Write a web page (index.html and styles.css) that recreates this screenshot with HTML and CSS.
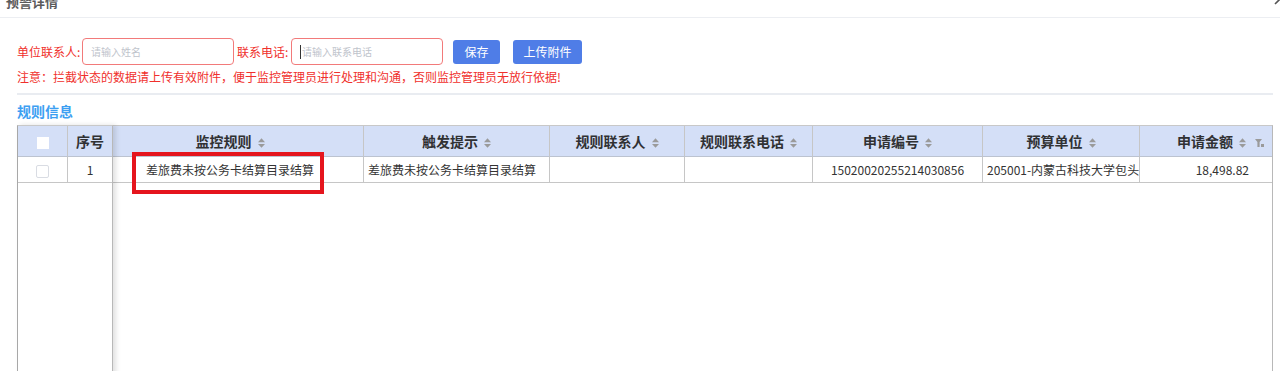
FILE: index.html
```html
<!DOCTYPE html>
<html lang="zh-CN">
<head>
    <meta charset="UTF-8">
    <title>预警详情</title>
    <link rel="stylesheet" href="styles.css">
</head>
<body>
    <div class="dialog">
        <div class="dialog-head">
            <span class="dialog-title">预警详情</span>
            <svg class="dialog-close" width="12" height="12" viewBox="0 0 12 12">
                <path d="M1 1 L11 11 M11 1 L1 11" stroke="#555" stroke-width="1.6"/>
            </svg>
        </div>
        <div class="dialog-body">
            <div class="contact-row">
                <label class="field-label label-name">单位联系人:</label>
                <div class="fake-input"><span class="placeholder">请输入姓名</span></div>
                <label class="field-label label-phone">联系电话:</label>
                <div class="fake-input"><span class="caret"></span><span class="placeholder">请输入联系电话</span></div>
                <button class="btn btn-save">保存</button>
                <button class="btn btn-upload">上传附件</button>
            </div>
            <p class="notice">注意：拦截状态的数据请上传有效附件，便于监控管理员进行处理和沟通，否则监控管理员无放行依据!</p>
            <div class="divider"></div>
            <h3 class="section-title">规则信息</h3>

            <div class="grid">
                <div class="grid-fixed">
                    <table class="grid-table">
                        <colgroup><col style="width:50px"><col style="width:44px"></colgroup>
                        <thead>
                            <tr>
                                <th class="col-check"><span class="check head-check"></span></th>
                                <th class="col-seq">序号</th>
                            </tr>
                        </thead>
                        <tbody>
                            <tr>
                                <td class="col-check"><span class="check"></span></td>
                                <td class="col-seq">1</td>
                            </tr>
                        </tbody>
                    </table>
                </div>
                <div class="grid-main">
                    <table class="grid-table">
                        <colgroup>
                            <col style="width:251px"><col style="width:186px"><col style="width:135px">
                            <col style="width:128px"><col style="width:170px"><col style="width:157px">
                            <col style="width:132px">
                        </colgroup>
                        <thead>
                            <tr>
                                <th class="col-rule">监控规则<svg class="sort" viewBox="0 0 8 11"><path d="M4 0 L8 4.5 L0 4.5Z M0 6.5 L8 6.5 L4 11Z"/></svg></th>
                                <th>触发提示<svg class="sort" viewBox="0 0 8 11"><path d="M4 0 L8 4.5 L0 4.5Z M0 6.5 L8 6.5 L4 11Z"/></svg></th>
                                <th>规则联系人<svg class="sort" viewBox="0 0 8 11"><path d="M4 0 L8 4.5 L0 4.5Z M0 6.5 L8 6.5 L4 11Z"/></svg></th>
                                <th>规则联系电话<svg class="sort" viewBox="0 0 8 11"><path d="M4 0 L8 4.5 L0 4.5Z M0 6.5 L8 6.5 L4 11Z"/></svg></th>
                                <th>申请编号<svg class="sort" viewBox="0 0 8 11"><path d="M4 0 L8 4.5 L0 4.5Z M0 6.5 L8 6.5 L4 11Z"/></svg></th>
                                <th>预算单位<svg class="sort" viewBox="0 0 8 11"><path d="M4 0 L8 4.5 L0 4.5Z M0 6.5 L8 6.5 L4 11Z"/></svg></th>
                                <th class="col-amount">申请金额<svg class="sort" viewBox="0 0 8 11"><path d="M4 0 L8 4.5 L0 4.5Z M0 6.5 L8 6.5 L4 11Z"/></svg><svg class="filter" viewBox="0 0 9 8"><path d="M0 0 H7 L4.6 3 V8 H2.4 V3Z"/><rect x="6" y="5" width="3" height="3"/></svg></th>
                            </tr>
                        </thead>
                        <tbody>
                            <tr>
                                <td class="col-rule">差旅费未按公务卡结算目录结算</td>
                                <td class="cell-left">差旅费未按公务卡结算目录结算</td>
                                <td></td>
                                <td></td>
                                <td>15020020255214030856</td>
                                <td class="cell-left">205001-内蒙古科技大学包头</td>
                                <td class="col-amount amount">18,498.82</td>
                            </tr>
                        </tbody>
                    </table>
                </div>
                <div class="highlight"></div>
            </div>
        </div>
    </div>
</body>
</html>
```

FILE: styles.css
```css
body {
    margin: 0;
    background: #fff;
    font-family: "Noto Sans CJK SC", "Microsoft YaHei", sans-serif;
    color: #333;
    overflow: hidden;
    height: 371px;
}

.dialog-head {
    height: 17px;
    border-bottom: 1px solid #eceef2;
    display: flex;
    justify-content: space-between;
    align-items: flex-start;
    padding-left: 6px;
    overflow: hidden;
}

.dialog-title {
    font-size: 13px;
    line-height: 13px;
    font-weight: bold;
    color: #5a5a5a;
    margin-top: -5px;
}

.dialog-close {
    margin-top: -7px;
    margin-right: -6px;
}

.dialog-body {
    padding: 0 7px 0 17px;
}

.contact-row {
    display: flex;
    align-items: center;
    height: 27px;
    margin-top: 20px;
}

.field-label {
    font-size: 12px;
    color: #f0302c;
    white-space: nowrap;
}

.label-name {
    width: 65px;
}

.label-phone {
    width: 54px;
    margin-left: 3px;
}

.fake-input {
    width: 142px;
    height: 25px;
    border: 1px solid #f27a7a;
    border-radius: 4px;
    display: flex;
    align-items: center;
    padding-left: 8px;
}

.placeholder {
    font-size: 10px;
    color: #c0c4cc;
}

.caret {
    width: 1px;
    height: 14px;
    background: #333;
    margin-right: 1px;
}

.btn {
    height: 24px;
    border: none;
    border-radius: 3px;
    background: #4f7de7;
    color: #fff;
    font-family: inherit;
    font-size: 12px;
    padding: 0;
}

.btn-save {
    width: 47px;
    margin-left: 10px;
}

.btn-upload {
    width: 69px;
    margin-left: 13px;
}

.notice {
    margin: 4px 0 0;
    font-size: 12px;
    line-height: 16px;
    color: #f0302c;
}

.divider {
    height: 2px;
    background: #e9ecf1;
    margin-top: 8px;
}

.section-title {
    margin: 6px 0 0;
    font-size: 14px;
    line-height: 20px;
    font-weight: bold;
    color: #3d9ff2;
}

.grid {
    display: flex;
    margin-top: 4px;
    height: 260px;
    position: relative;
}

.grid-fixed {
    width: 94px;
    border-top: 1px solid #c8c8c8;
    border-left: 1px solid #a8a8a8;
    border-right: 1px solid #b8b8b8;
    box-shadow: 3px 0 5px rgba(0, 0, 0, 0.12);
    position: relative;
    z-index: 1;
    background: #fff;
}

.grid-main {
    width: 1159px;
    border-top: 1px solid #c8c8c8;
    border-right: 1px solid #b8b8b8;
}

.grid-table {
    border-collapse: separate;
    border-spacing: 0;
    table-layout: fixed;
    width: 100%;
}

.grid-table th,
.grid-table td {
    padding: 0 4px;
    border-right: 1px solid #c6c6c6;
    border-bottom: 1px solid #c6c6c6;
    text-align: center;
    white-space: nowrap;
    overflow: hidden;
}

.grid-table th:last-child,
.grid-table td:last-child {
    border-right: none;
}

.grid-table th {
    height: 30px;
    background: #d4dff7;
    font-size: 14px;
    font-weight: bold;
    color: #303133;
    border-bottom-color: #bcc3d0;
}

.grid-table td {
    height: 25px;
    font-size: 12px;
    color: #333;
}

.grid-table .cell-left {
    text-align: left;
}

.grid-table .col-rule {
    padding-right: 20px;
}

.grid-table .col-amount {
    text-align: right;
    padding-right: 8px;
}

.grid-table .amount {
    padding-right: 23px;
}

.check {
    display: inline-block;
    width: 11px;
    height: 11px;
    border: 1px solid #d9dce3;
    border-radius: 2px;
    background: #fff;
    vertical-align: middle;
}

.head-check {
    width: 12px;
    height: 12px;
    border: none;
    border-radius: 0;
}

.sort {
    width: 7px;
    height: 10px;
    margin-left: 6px;
    fill: #9a9a9a;
    vertical-align: -1px;
}

.filter {
    width: 9px;
    height: 8px;
    margin-left: 9px;
    fill: #9a9a9a;
    vertical-align: 0;
}

.highlight {
    position: absolute;
    left: 115px;
    top: 27px;
    width: 192px;
    height: 42px;
    border: 4px solid #e5151d;
    box-sizing: border-box;
    z-index: 2;
}
```
